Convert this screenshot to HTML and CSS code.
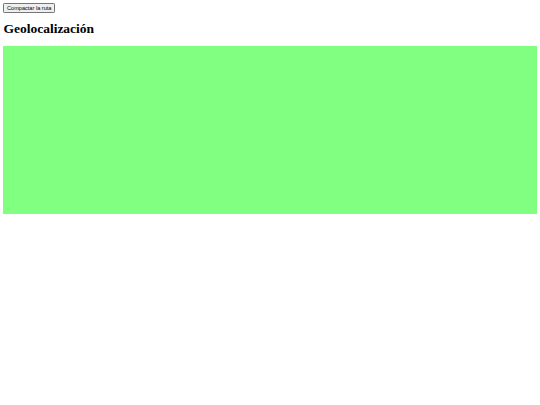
FILE: index.html
```html
<!DOCTYPE html>
<html lang="es">
<head>
<meta charset="utf-8">
<title>Geolocalización</title>
<link rel="stylesheet" href="styles.css">
</head>
<body>
<div class="toolbar">
  <button class="btn" type="button">Compactar la ruta</button>
</div>
<h1 class="title">Geolocalización</h1>
<div class="map"></div>
</body>
</html>
```
FILE: styles.css
```css
html, body {
  background: #ffffff;
}
body {
  margin: 3.4px;
  font-family: "Liberation Serif", "Times New Roman", serif;
}
.toolbar {
  display: flex;
}
.btn {
  font-family: "Liberation Sans", Arial, sans-serif;
  font-size: 5.6px;
  line-height: 6.5px;
  padding: 0.5px 2.6px;
  margin: 0;
  color: #000;
  background: #efefef;
  border: 1px solid #767676;
  border-radius: 1.2px;
}
.title {
  font-family: "Liberation Serif", "Times New Roman", serif;
  font-size: 13.5px;
  font-weight: bold;
  line-height: normal;
  margin: 8.4px 0;
  color: #000;
}
.map {
  height: 168.5px;
  background: #80ff80;
  box-shadow: 0 0 1px #c8ffc8;
}
```
